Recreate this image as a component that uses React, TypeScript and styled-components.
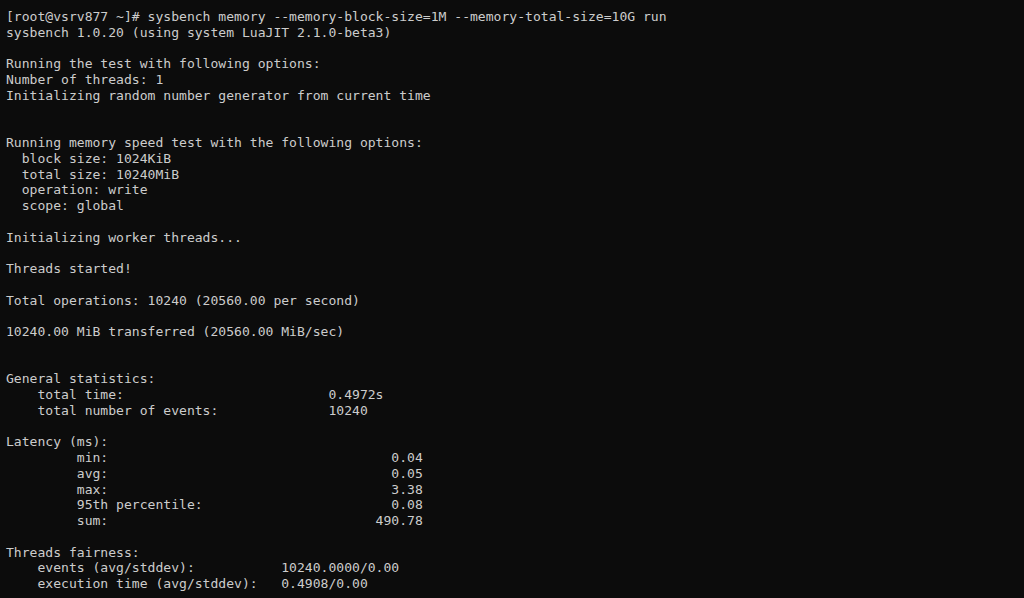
import React from "react";
import styled, { createGlobalStyle } from "styled-components";

const GlobalStyle = createGlobalStyle`
  html, body {
    margin: 0;
    padding: 0;
    background: #0c0c0c;
  }
  #root {
    min-height: 100vh;
    background: #0c0c0c;
  }
`;

const Terminal = styled.div`
  width: 1024px;
  height: 598px;
  box-sizing: border-box;
  padding: 9px 6px 0 6px;
  background: #0c0c0c;
  color: #cccccc;
  font-family: "DejaVu Sans Mono", "Liberation Mono", monospace;
  font-size: 13.07px;
  line-height: 15.75px;
  overflow: hidden;
`;

const Line = styled.div`
  white-space: pre;
  height: 15.75px;
`;

const lines: string[] = [
  "[root@vsrv877 ~]# sysbench memory --memory-block-size=1M --memory-total-size=10G run",
  "sysbench 1.0.20 (using system LuaJIT 2.1.0-beta3)",
  "",
  "Running the test with following options:",
  "Number of threads: 1",
  "Initializing random number generator from current time",
  "",
  "",
  "Running memory speed test with the following options:",
  "  block size: 1024KiB",
  "  total size: 10240MiB",
  "  operation: write",
  "  scope: global",
  "",
  "Initializing worker threads...",
  "",
  "Threads started!",
  "",
  "Total operations: 10240 (20560.00 per second)",
  "",
  "10240.00 MiB transferred (20560.00 MiB/sec)",
  "",
  "",
  "General statistics:",
  "    total time:                          0.4972s",
  "    total number of events:              10240",
  "",
  "Latency (ms):",
  "         min:                                    0.04",
  "         avg:                                    0.05",
  "         max:                                    3.38",
  "         95th percentile:                        0.08",
  "         sum:                                  490.78",
  "",
  "Threads fairness:",
  "    events (avg/stddev):           10240.0000/0.00",
  "    execution time (avg/stddev):   0.4908/0.00",
];

export default function App() {
  return (
    <>
      <GlobalStyle />
      <Terminal>
        {lines.map((l, i) => (
          <Line key={i}>{l}</Line>
        ))}
      </Terminal>
    </>
  );
}
